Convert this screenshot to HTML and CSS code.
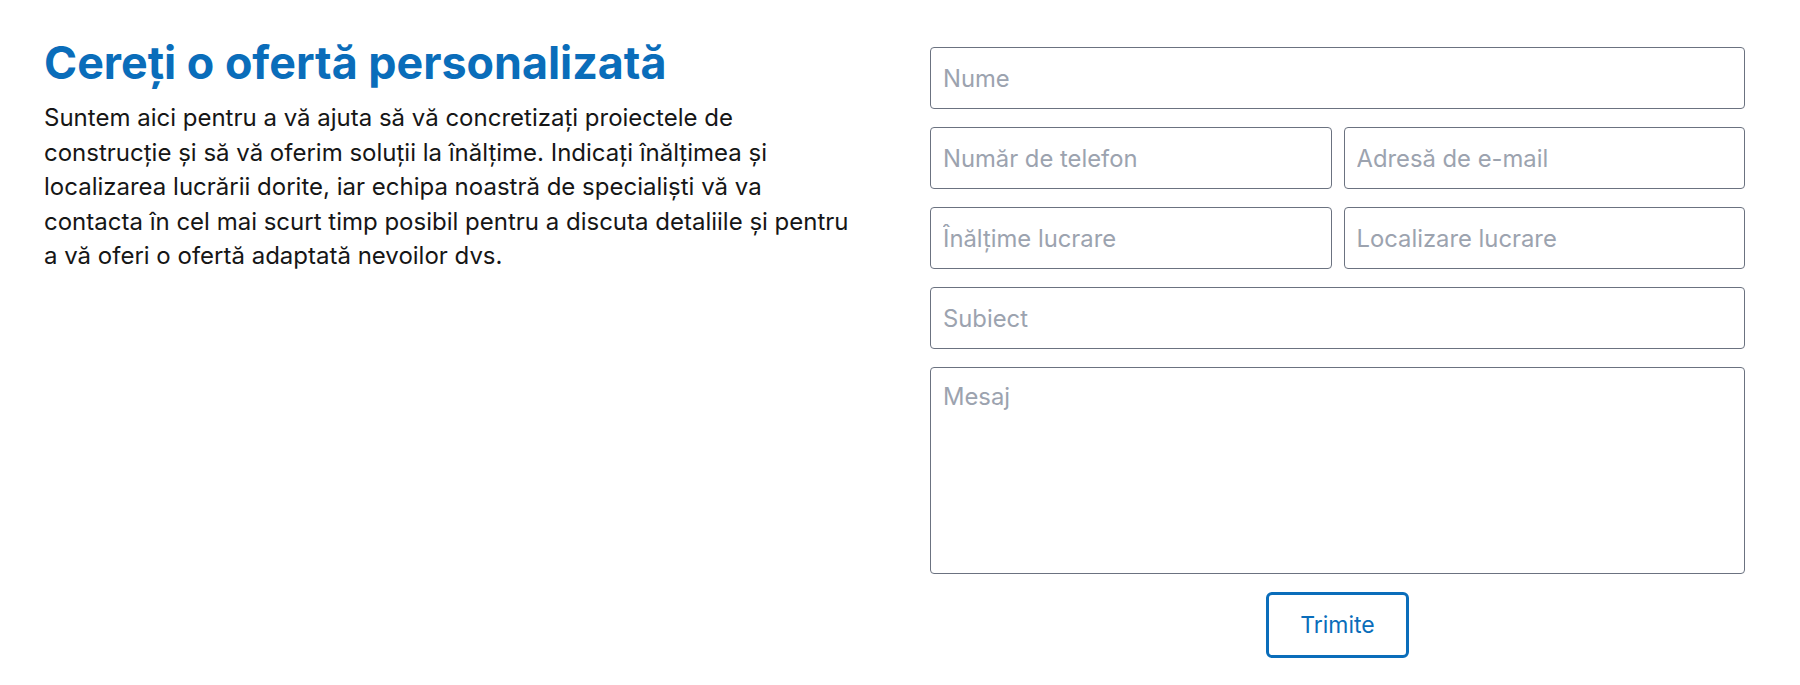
FILE: index.html
```html
<!DOCTYPE html>
<html lang="ro">
<head>
<meta charset="utf-8">
<title>Cereți o ofertă personalizată</title>
<link rel="stylesheet" href="styles.css">
</head>
<body>
<section class="quote">
  <div class="intro">
    <h1 class="title">Cereți o ofertă personalizată</h1>
    <p class="lead">Suntem aici pentru a vă ajuta să vă concretizați proiectele de construcție și să vă oferim soluții la înălțime. Indicați înălțimea și localizarea lucrării dorite, iar echipa noastră de specialiști vă va contacta în cel mai scurt timp posibil pentru a discuta detaliile și pentru a vă oferi o ofertă adaptată nevoilor dvs.</p>
  </div>
  <form class="form">
    <input class="field" type="text" placeholder="Nume">
    <div class="row">
      <input class="field" type="tel" placeholder="Număr de telefon">
      <input class="field" type="email" placeholder="Adresă de e-mail">
    </div>
    <div class="row">
      <input class="field" type="text" placeholder="Înălțime lucrare">
      <input class="field" type="text" placeholder="Localizare lucrare">
    </div>
    <input class="field" type="text" placeholder="Subiect">
    <textarea class="field area" placeholder="Mesaj"></textarea>
    <div class="actions">
      <button class="submit" type="submit">Trimite</button>
    </div>
  </form>
</section>
</body>
</html>
```

FILE: styles.css
```css
* { box-sizing: border-box; }
html, body { margin: 0; background: #fff; }
body { font-family: Inter, "Noto Sans", sans-serif; color: #111; }

.quote {
  display: grid;
  grid-template-columns: 810px 815px;
  column-gap: 76px;
  padding: 47px 0 0 44px;
  align-items: start;
}

.title {
  margin: -11px 0 0 0;
  font-size: 44.8px;
  line-height: 54px;
  font-weight: 700;
  color: #0a6dba;
}

.lead {
  margin: 11px 0 0 0;
  font-size: 24px;
  line-height: 34.6px;
  color: #161616;
}

.form {
  display: flex;
  flex-direction: column;
  gap: 18px;
}

.row {
  display: grid;
  grid-template-columns: 1fr 1fr;
  column-gap: 12px;
}

.field {
  display: block;
  width: 100%;
  height: 62px;
  margin: 0;
  padding: 0 12px;
  border: 1px solid #6b7280;
  border-radius: 4px;
  font-family: Inter, "Noto Sans", sans-serif;
  font-size: 23.8px;
  color: #111;
  background: #fff;
  outline: none;
}

.field::placeholder { color: #9ca3af; opacity: 1; }

.area {
  height: 207px;
  padding: 14px 12px;
  resize: none;
  line-height: 30px;
}

.actions {
  display: flex;
  justify-content: center;
}

.submit {
  font-family: Inter, "Noto Sans", sans-serif;
  font-size: 23px;
  line-height: 28px;
  padding: 16px 31px;
  border: 3px solid #0a6dba;
  border-radius: 6px;
  background: #fff;
  color: #0a6dba;
  cursor: pointer;
}
```
